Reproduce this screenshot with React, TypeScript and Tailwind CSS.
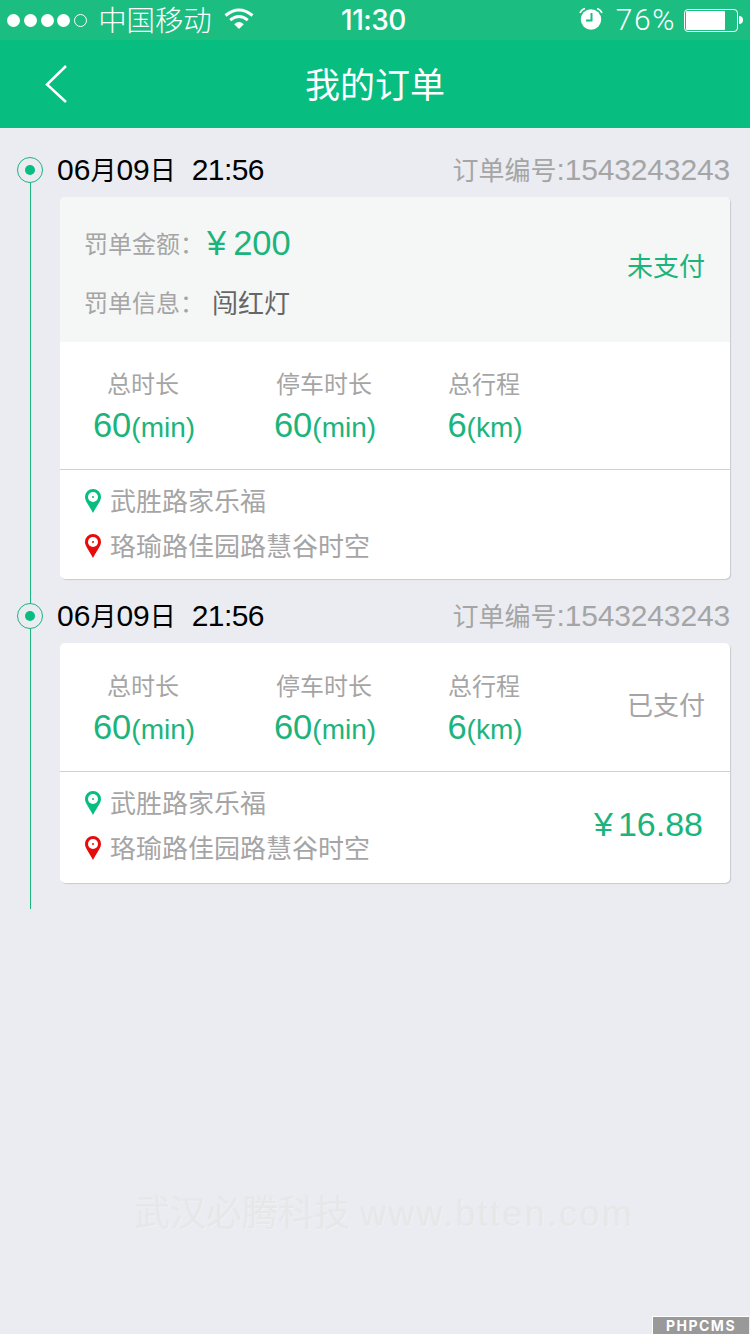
import { ReactNode } from "react";

type Order = {
  date: string[];
  time: string;
  no: string;
  paid: boolean;
  fine?: { amount: string; info: string };
  price?: string;
};

const orders: Order[] = [
  {
    date: ["06", "月", "09", "日"],
    time: "21:56",
    no: "1543243243",
    paid: false,
    fine: { amount: "200", info: "闯红灯" },
  },
  {
    date: ["06", "月", "09", "日"],
    time: "21:56",
    no: "1543243243",
    paid: true,
    price: "16.88",
  },
];

function StatusBar() {
  return (
    <div className="h-10 bg-[#1cbd81] flex items-center text-white">
      <div className="flex-1 flex items-center pl-[7px]">
        <div className="flex gap-[3.8px]">
          {[0, 1, 2, 3].map((i) => (
            <span key={i} className="size-[13px] rounded-full bg-white" />
          ))}
          <span className="size-[13px] rounded-full border border-white" />
        </div>
        <span className="ml-[11px] pt-[3px] text-[28.4px] leading-[37px] font-light">中国移动</span>
        <svg className="ml-3 mt-[-2px]" width="30" height="22" viewBox="0 0 30 22" fill="none" stroke="white" strokeWidth="3">
          <path d="M1.500 7.500Q15 -3.500 28.500 7.500" />
          <path d="M6.200 12.200Q15 4.800 23.800 12.200" />
          <path d="M10.200 16.200Q15 12 19.800 16.200L15 21Z" fill="white" stroke="none" />
        </svg>
      </div>
      <span className="mr-[3px] text-[28px] leading-10 font-medium tracking-[-0.5px] font-[Inter]">11:30</span>
      <div className="flex-1 flex items-center justify-end pr-[7px]">
        <svg className="mt-[-2px]" width="24" height="24" viewBox="0 0 24 24" fill="none">
          <circle cx="12" cy="12.5" r="10.2" fill="white" />
          <path d="M1 6Q2.500 2.500 6 1.500M23 6Q21.500 2.500 18 1.500" stroke="white" strokeWidth="1.600" />
          <path d="M12.500 6V13.500H7" stroke="#1cbd81" strokeWidth="2" />
        </svg>
        <span className="ml-[13px] text-[30px] leading-10 font-light font-[Roboto] tracking-[1.6px]">76%</span>
        <div className="ml-[8px] w-[54px] h-[23px] rounded-[4px] border border-white p-px">
          <div className="h-full w-[39px] rounded-[1px] bg-white" />
        </div>
        <span className="ml-px w-[4px] h-[8px] rounded-r-full bg-white" />
      </div>
    </div>
  );
}

function Header() {
  return (
    <header className="h-[88px] bg-[#07bd80] flex items-center text-white">
      <div className="w-[150px] pl-[44px]">
        <svg width="24" height="40" viewBox="0 0 24 40" fill="none" stroke="white" strokeWidth="2.5">
          <path d="M22 2L3 20.500L22 38" />
        </svg>
      </div>
      <h1 className="flex-1 pt-[4px] text-center text-[35px] leading-[84px]">我的订单</h1>
      <div className="w-[150px]" />
    </header>
  );
}

function Pin({ className }: { className: string }) {
  return (
    <svg className={className} width="16" height="24" viewBox="0 0 16 24">
      <path d="M8 0A8 8 0 0 0 0 8C0 12 3.500 15.500 8 24C12.500 15.500 16 12 16 8A8 8 0 0 0 8 0Z" fill="currentColor" />
      <circle cx="8" cy="8" r="5" fill="white" />
      <circle cx="8" cy="8" r="1" fill="currentColor" />
    </svg>
  );
}

function Stat({ label, value, unit }: { label: string; value: string; unit: string }) {
  return (
    <div className="flex flex-col items-center">
      <span className="text-[24px] leading-[30px] text-[#a5a5a5]">{label}</span>
      <span className="mt-[5px] ml-[2px] h-10 text-[34.500px] leading-10 text-[#1bb47c] whitespace-nowrap">
        {value}
        <span className="text-[28px]">({unit})</span>
      </span>
    </div>
  );
}

function Row({ label, children }: { label: string; children: ReactNode }) {
  return (
    <div className="h-[59px] flex items-center">
      <span className="w-[123px] text-[24px] text-[#a5a5a5]">{label}：</span>
      {children}
    </div>
  );
}

function OrderItem({ order }: { order: Order }) {
  const { date, fine, price, paid } = order;

  return (
    <article className="flex">
      {/* timeline */}
      <div className="w-[60px] flex flex-col">
        <div className="ml-[17px] size-[26px] shrink-0 rounded-full border border-[#1bb47c] flex items-center justify-center">
          <span className="size-[10px] rounded-full bg-[#07bd80]" />
        </div>
        <div className="ml-[30px] w-px flex-1 bg-[#1bb47c]" />
      </div>

      <div className={paid ? "w-[670px] pb-[26px]" : "w-[670px] pb-6"}>
        <div className="h-10 -ml-[3px] flex justify-between text-[30px] leading-[26px] text-black whitespace-nowrap">
          <div>
            {date[0]}
            <span className="text-[26px]">{date[1]}</span>
            {date[2]}
            <span className="text-[26px]">{date[3]}</span>
            <span className="ml-[16px] tracking-[-0.6px]">{order.time}</span>
          </div>
          <div className="text-[#a5a5a5]">
            <span className="text-[26px]">订单编号</span>
            <span className="tracking-[-0.15px]">:{order.no}</span>
          </div>
        </div>

        <div className="rounded-[5px] bg-white overflow-hidden shadow-[1px_1px_1px_#c9cacd]">
          {fine && (
            <div className="h-[145px] bg-[#f4f7f6] pl-6 pr-[25px] flex items-center justify-between">
              <div className="pt-[10px]">
                <Row label="罚单金额">
                  <span className="mt-[-2px] text-[34.500px] text-[#1bb47c]">
                    ¥<span className="ml-[7px]">{fine.amount}</span>
                  </span>
                </Row>
                <Row label="罚单信息">
                  <span className="ml-[5px] text-[26px] text-[#666]">{fine.info}</span>
                </Row>
              </div>
              <span className="mt-[-5px] text-[26px] text-[#1bb47c]">未支付</span>
            </div>
          )}

          <div className={paid ? "h-32 pt-[29px] flex pr-[25px]" : "h-[127px] pt-[28px] flex pr-[25px]"}>
            <div className="ml-[31px] w-[104px]">
              <Stat label="总时长" value="60" unit="min" />
            </div>
            <div className="ml-[77px] w-[104px]">
              <Stat label="停车时长" value="60" unit="min" />
            </div>
            <div className="ml-[70px] w-[76px]">
              <Stat label="总行程" value="6" unit="km" />
            </div>
            {paid && <span className="ml-auto mt-[14px] text-[26px] leading-10 text-[#a5a5a5]">已支付</span>}
          </div>

          <div
            className={
              paid
                ? "h-28 border-t border-[#cfd0d2] pl-[25px] pr-[27px] flex justify-between"
                : "h-[110px] border-t border-[#cfd0d2] pl-[25px] pr-[27px] flex justify-between"
            }
          >
            <div className="pt-[10px] text-[26px] leading-[45px] text-[#a5a5a5]">
              <div className="flex items-center gap-[9px]">
                <Pin className="-mt-[4px] text-[#07bd80]" />
                武胜路家乐福
              </div>
              <div className="flex items-center gap-[9px]">
                <Pin className="-mt-[4px] text-[#e60c0c]" />
                珞瑜路佳园路慧谷时空
              </div>
            </div>
            {price && (
              <span className="mt-[32px] text-[34px] leading-10 text-[#1bb47c]">
                ¥<span className="ml-[5px]">{price}</span>
              </span>
            )}
          </div>
        </div>
      </div>
    </article>
  );
}

export default function App() {
  return (
    <div className="w-[750px] h-[1334px] overflow-hidden flex flex-col bg-[#ebecf1] font-['Liberation_Sans','Noto_Sans_CJK_SC',sans-serif]">
      <StatusBar />
      <Header />

      <main className="flex-1 pt-[29px]">
        {orders.map((order, i) => (
          <OrderItem key={i} order={order} />
        ))}
      </main>

      <footer>
        <p className="pl-[134px] mb-[78px] text-[36px] leading-[48px] whitespace-nowrap text-[#e6e7e8] [text-shadow:1px_1px_0_#f0f0f2]">
          武汉必腾科技 <span className="tracking-[2.3px]">www.btten.com</span>
        </p>
        <div className="ml-auto mr-px w-[97px] h-[18px] border-t border-l border-white bg-[#999] flex items-center justify-center">
          <span className="text-[14px] leading-none font-bold text-white tracking-[1.500px] font-[Inter]">PHPCMS</span>
        </div>
      </footer>
    </div>
  );
}
